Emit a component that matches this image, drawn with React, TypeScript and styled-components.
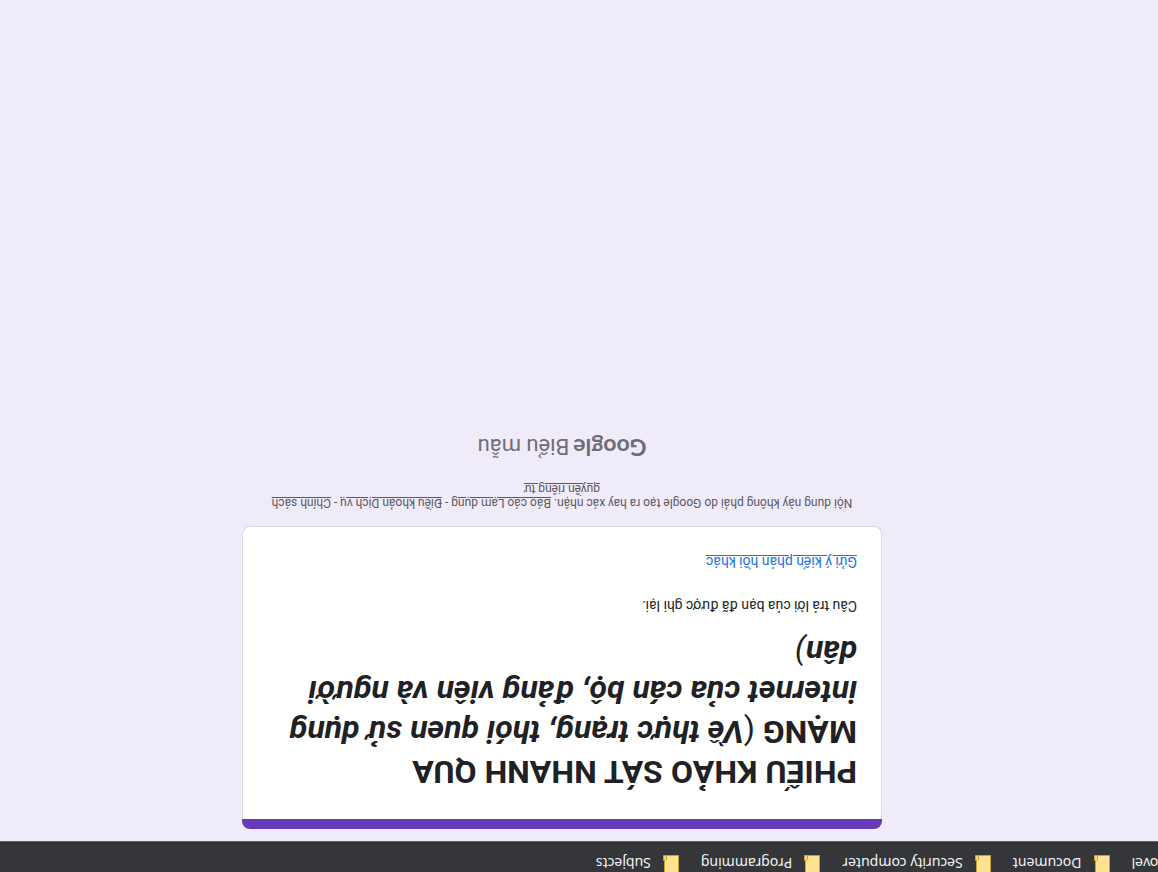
import React from "react";
import styled, { createGlobalStyle } from "styled-components";

const GlobalStyle = createGlobalStyle`
  * { box-sizing: border-box; }
  html, body { margin: 0; background: #f0ebf8; }
  body { font-family: Roboto, "Liberation Sans", sans-serif; }
`;

const Page = styled.div`
  min-height: 100vh;
  overflow: hidden;
  background: #f0ebf8;
  transform: rotate(180deg);
`;

const BookmarkBar = styled.nav`
  display: flex;
  gap: 22px;
  height: 31px;
  overflow: hidden;
  background: #35363a;
  border-bottom: 1px solid #5f6065;
`;

const Bookmark = styled.a<{ $clipped?: boolean }>`
  display: flex;
  gap: 12px;
  flex: none;
  height: 18px;
  margin-left: ${(p) => (p.$clipped ? "-11px" : "0")};
  color: #f1f3f4;
  font: 14px/18px "Noto Sans", sans-serif;
  text-decoration: none;
  white-space: nowrap;
`;

const FolderSvg = styled.svg`
  display: block;
  width: 16px;
  height: 18px;
`;

const Main = styled.main`
  display: flex;
  flex-direction: column;
  align-items: center;
  padding: 12px 0 0 34px;
`;

const Card = styled.section`
  width: 100%;
  max-width: 640px;
  color: #202124;
`;

const CardAccent = styled.div`
  height: 10px;
  background: #673ab7;
  border-radius: 8px 8px 0 0;
`;

const CardBody = styled.div`
  background: #fff;
  border: 1px solid #dadce0;
  border-top: 0;
  border-radius: 0 0 8px 8px;
  padding: 27px 24px 25px;
`;

const Title = styled.h1`
  margin: 0;
  font-size: 32px;
  line-height: 40px;
  font-weight: 700;
`;

const Paren = styled.span`
  font-weight: 400;
`;

const Message = styled.p`
  margin: 16px 0 24px;
  font-size: 14px;
  line-height: 20px;
`;

const FeedbackLink = styled.a`
  display: block;
  width: fit-content;
  font-size: 14px;
  line-height: 20px;
  color: #1a73e8;
`;

const Disclaimer = styled.p`
  width: 100%;
  max-width: 640px;
  margin: 16px 0 20px;
  padding: 0 24px;
  font-size: 12px;
  line-height: 14px;
  text-align: center;
  color: #5b5863;

  a { color: inherit; }
`;

const Brand = styled.a`
  display: flex;
  align-items: baseline;
  gap: 4px;
  color: #6f6c76;
  font-size: 22px;
  line-height: 28px;
  text-decoration: none;
`;

const BrandName = styled.span`
  font-family: Lato, sans-serif;
  font-size: 23px;
  font-weight: 700;
`;

const Folder = () => (
  <FolderSvg viewBox="0 0 16 18" aria-hidden="true">
    <path d="M0.5 -2H14.5V16.5H0.5Z" fill="#ffe391" stroke="#c9a22f" />
    <path d="M12.5 16.5V12.5L13.5 11.5H15.5V16.5Z" fill="#f8d978" stroke="#c9a22f" />
  </FolderSvg>
);

const folders = ["Document", "Security computer", "Programming", "Subjects"];

export default function App() {
  return (
    <>
      <GlobalStyle />
      <Page>
        <BookmarkBar aria-label="Bookmarks">
          <Bookmark href="#" $clipped>Novel</Bookmark>
          {folders.map((name) => (
            <Bookmark href="#" key={name}>
              <Folder />
              {name}
            </Bookmark>
          ))}
        </BookmarkBar>
        <Main>
          <Card>
            <CardAccent />
            <CardBody>
              <Title>
                PHIẾU KHẢO SÁT NHANH QUA MẠNG&nbsp;<Paren>(</Paren>
                <i>
                  Về thực trạng, thói quen sử dụng internet của cán bộ, đảng viên và người dân
                  <Paren>)</Paren>
                </i>
              </Title>
              <Message>Câu trả lời của bạn đã được ghi lại.</Message>
              <FeedbackLink href="#">Gửi ý kiến phản hồi khác</FeedbackLink>
            </CardBody>
          </Card>
          <Disclaimer>
            Nội dung này không phải do Google tạo ra hay xác nhận. <a href="#">Báo cáo Lạm dụng</a> -{" "}
            <a href="#">Điều khoản Dịch vụ</a> - <a href="#">Chính sách quyền riêng tư</a>
          </Disclaimer>
          <Brand href="#">
            <BrandName>Google</BrandName>
            <span>Biểu mẫu</span>
          </Brand>
        </Main>
      </Page>
    </>
  );
}
